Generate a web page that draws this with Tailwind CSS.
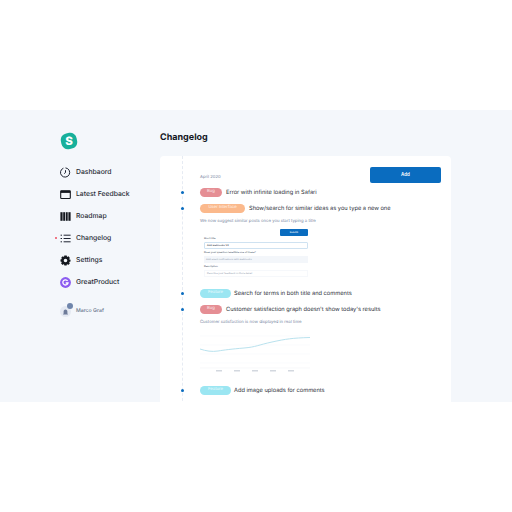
<!DOCTYPE html>
<html lang="en">
  <head>
    <meta charset="UTF-8" />
    <title>Changelog</title>
    <script src="https://cdn.jsdelivr.net/npm/@tailwindcss/browser@4"></script>
  </head>
  <body class="h-screen flex flex-col bg-white overflow-hidden [text-rendering:geometricPrecision]" style="font-family: Inter, 'Noto Sans', sans-serif">
    <div class="h-[110px]"></div>

    <div class="h-[292px] flex bg-[#f4f7fb] overflow-hidden">
      <!-- sidebar -->
      <aside class="w-[160px] shrink-0 pl-[60px] pt-[22px]">
        <svg width="18" height="18" viewBox="0 0 18 18" class="block">
          <rect x="1" y="1" width="16" height="16" rx="6.500" transform="rotate(-10 9 9)" fill="#17b09b" />
          <text x="9" y="12.800" text-anchor="middle" font-size="11.500" font-weight="800" fill="#fff" font-family="Inter">S</text>
        </svg>

        <nav class="mt-[11px] flex flex-col text-[6.800px] font-medium text-[#272b35]">
          <div class="h-[22px] flex items-center gap-[5px]">
            <svg width="11" height="11" viewBox="0 0 11 11" fill="none" stroke="#1d2230" stroke-width="1"><path d="M3.400 1.200A4.600 4.600 0 1 0 5.500 .9" /><path d="M5.500 3.200V5.600L4.200 6.600" /></svg>
            <span>Dashbaord</span>
          </div>
          <div class="h-[22px] flex items-center gap-[5px]">
            <svg width="11" height="11" viewBox="0 0 11 11" fill="none"><rect x=".7" y="1.700" width="9.600" height="7.800" rx=".8" stroke="#14181f" stroke-width="1.100" /><rect x=".7" y="1.700" width="9.600" height="2.200" fill="#14181f" /></svg>
            <span>Latest Feedback</span>
          </div>
          <div class="h-[22px] flex items-center gap-[5px]">
            <svg width="11" height="11" viewBox="0 0 11 11" fill="#14181f"><rect x=".4" y="1.200" width="2.200" height="8.600" /><rect x="3.200" y="1.200" width="1.900" height="8.600" /><rect x="5.800" y="1.200" width="1.900" height="8.600" /><rect x="8.400" y="1.200" width="2.200" height="8.600" /></svg>
            <span>Roadmap</span>
          </div>
          <div class="relative h-[22px] flex items-center gap-[5px]">
            <span class="absolute left-[-5px] top-[10px] w-[2px] h-[2px] rounded-full bg-[#ee4d5f]"></span>
            <svg width="11" height="11" viewBox="0 0 11 11" stroke="#1d2230" stroke-width="1"><path d="M3.600 2.200H10.600M3.600 5.500H10.600M3.600 8.800H10.600" /><path d="M.6 2.200H2M.6 5.500H2M.6 8.800H2" /></svg>
            <span>Changelog</span>
          </div>
          <div class="h-[22px] flex items-center gap-[5px]">
            <svg width="11" height="11" viewBox="0 0 11 11"><path fill-rule="evenodd" fill="#14181f" d="M4.300.6H6.700L7.100 2 8.500 1.300 9.900 3 9 4.200 10.500 4.800V6.600L9.100 7.100 9.800 8.600 8.200 10 7 9.100 6.600 10.500H4.400L3.900 9.100 2.600 9.900 1 8.300 1.900 7 .5 6.600V4.500L1.900 4 1.200 2.700 2.800 1.200 4 2ZM5.500 3.700A1.800 1.800 0 1 0 5.500 7.300 1.800 1.800 0 1 0 5.500 3.700Z" /></svg>
            <span>Settings</span>
          </div>
          <div class="h-[22px] flex items-center gap-[5px]">
            <svg width="11" height="11" viewBox="0 0 11 11"><circle cx="5.500" cy="5.500" r="5.400" fill="#8b5cf0" /><path d="M7.600 3.900A2.600 2.600 0 1 0 8 6H5.700" fill="none" stroke="#fff" stroke-width="1.300" /></svg>
            <span>GreatProduct</span>
          </div>
        </nav>

        <div class="mt-[13px] flex items-center gap-[5px]">
          <div class="relative w-[11px] h-[11px] rounded-full bg-[#e4e9f2]">
            <svg width="7" height="7" viewBox="0 0 7 7" class="absolute left-[2px] top-[3px]" fill="#6d7b99"><path d="M3.500.6C2.200.6 1.600 1.600 1.600 2.800V4.400L.9 5.400H6.100L5.400 4.400V2.800C5.400 1.600 4.800.6 3.500.6Z" /></svg>
            <span class="absolute left-[7px] top-[-3px] w-[6px] h-[6px] rounded-full bg-[#6f85ab]"></span>
          </div>
          <span class="text-[5.200px] font-medium text-[#65718a]">Marco Graf</span>
        </div>
      </aside>

      <!-- main -->
      <main class="flex-1 min-w-0 pr-[61px]">
        <h1 class="mt-[21px] h-[14px] text-[9px] leading-[14px] font-bold text-[#14181f]">Changelog</h1>

        <section class="relative mt-[11px] h-[260px] bg-white rounded-t-[4px] pl-[40px] pr-[10px] pt-[11px] overflow-hidden">
          <div class="absolute left-[22px] top-0 bottom-0 border-l border-dashed border-[#e6ebf3]"></div>

          <div class="flex items-end justify-between h-[16px]">
            <p class="text-[4.200px] leading-[6px] text-[#7685a0] mb-[2px]">April 2020</p>
            <button class="w-[71px] h-[16px] rounded-[2px] bg-[#0a6cbf] text-white text-[4.500px] font-semibold">Add</button>
          </div>

          <div class="mt-[5px] h-[9px] relative flex items-center gap-[4px] text-[5.700px] text-[#2a2e38]">
            <span class="absolute left-[-19px] top-[3px] w-[3px] h-[3px] rounded-full bg-[#0a6cbf]"></span>
            <span class="w-[22px] h-[9px] rounded-full bg-[#e58e94] text-white/80 text-[4.200px] flex items-center justify-center">Bug</span>
            <span class="pt-[2px]">Error with infinite loading in Safari</span>
          </div>

          <div class="mt-[7px] h-[9px] relative flex items-center gap-[4px] text-[5.700px] text-[#2a2e38]">
            <span class="absolute left-[-19px] top-[3px] w-[3px] h-[3px] rounded-full bg-[#0a6cbf]"></span>
            <span class="w-[45px] h-[9px] rounded-full bg-[#fbb98c] text-white/80 text-[4.200px] flex items-center justify-center">User Interface</span>
            <span class="pt-[2px]">Show/search for similar ideas as you type a new one</span>
          </div>
          <p class="mt-[6px] h-[6px] text-[4.260px] leading-[6px] text-[#7685a0]">We now suggest similar posts once you start typing a title</p>

          <!-- form preview -->
          <div class="mt-[4px] w-[110px] h-[48px] flex flex-col text-[2.500px] leading-[4px] font-medium text-[#4a5568]">
            <div class="flex justify-end pr-[2px]">
              <span class="w-[28px] h-[7px] rounded-[1px] bg-[#0a6cbf] text-white flex items-center justify-center">Submit</span>
            </div>
            <p class="mt-[1px] pl-[4px] h-[4px]">Short title</p>
            <div class="mt-[1px] ml-[4px] mr-[2px] h-[7px] border border-[#cfe2f1] rounded-[1px] pl-[2px] flex items-center text-[#2b3242]">Add webhooks V2</div>
            <p class="mt-[2px] pl-[4px] h-[4px]">Does your question resemble one of these?</p>
            <div class="mt-[1px] ml-[4px] mr-[2px] h-[7px] bg-[#f3f6fa] pl-[2px] flex items-center font-normal text-[#8a96ab]">Add event notifications with webhooks</div>
            <p class="mt-[2px] pl-[4px] h-[4px]">Description</p>
            <div class="mt-[1px] ml-[4px] mr-[2px] h-[7px] border border-[#f6f8fb] pl-[2px] flex items-center font-normal text-[#8a96ab]">Describe your feedback in more detail</div>
          </div>

          <div class="mt-[12px] h-[9px] relative flex items-center gap-[3px] text-[5.700px] text-[#2a2e38]">
            <span class="absolute left-[-19px] top-[3px] w-[3px] h-[3px] rounded-full bg-[#0a6cbf]"></span>
            <span class="w-[31px] h-[9px] rounded-full bg-[#9be6f2] text-white/80 text-[4.200px] flex items-center justify-center">Feature</span>
            <span class="pt-[2px]">Search for terms in both title and comments</span>
          </div>

          <div class="mt-[7px] h-[9px] relative flex items-center gap-[4px] text-[5.700px] text-[#2a2e38]">
            <span class="absolute left-[-19px] top-[3px] w-[3px] h-[3px] rounded-full bg-[#0a6cbf]"></span>
            <span class="w-[22px] h-[9px] rounded-full bg-[#e58e94] text-white/80 text-[4.200px] flex items-center justify-center">Bug</span>
            <span class="pt-[2px]">Customer satisfaction graph doesn't show today's results</span>
          </div>
          <p class="mt-[6px] h-[6px] text-[4.260px] leading-[6px] text-[#7685a0]">Customer satisfaction is now displayed in real time</p>

          <!-- satisfaction chart -->
          <svg width="110" height="46" viewBox="0 0 110 46" class="block mt-[2px]" fill="none">
            <path d="M0 8H110M0 17H110M0 26H110M0 35H110" stroke="#f7f9fb" stroke-width=".6" />
            <path d="M0 21C6 23 12 24 18 23S32 21 44 20 58 17 72 14 92 10 110 9.500" stroke="#b9e2ee" stroke-width="1" />
            <path d="M0 40H110" stroke="#f1f3f7" stroke-width=".6" />
            <g fill="#d3d8df">
              <rect x="16" y="42" width="6" height="1.500" />
              <rect x="34" y="42" width="6" height="1.500" />
              <rect x="52" y="42" width="6" height="1.500" />
              <rect x="70" y="42" width="6" height="1.500" />
              <rect x="88" y="42" width="6" height="1.500" />
            </g>
          </svg>

          <div class="mt-[12px] h-[9px] relative flex items-center gap-[3px] text-[5.700px] text-[#2a2e38]">
            <span class="absolute left-[-19px] top-[3px] w-[3px] h-[3px] rounded-full bg-[#0a6cbf]"></span>
            <span class="w-[31px] h-[9px] rounded-full bg-[#9be6f2] text-white/80 text-[4.200px] flex items-center justify-center">Feature</span>
            <span class="pt-[2px]">Add image uploads for comments</span>
          </div>
        </section>
      </main>
    </div>

    <div class="flex-1"></div>
  </body>
</html>
